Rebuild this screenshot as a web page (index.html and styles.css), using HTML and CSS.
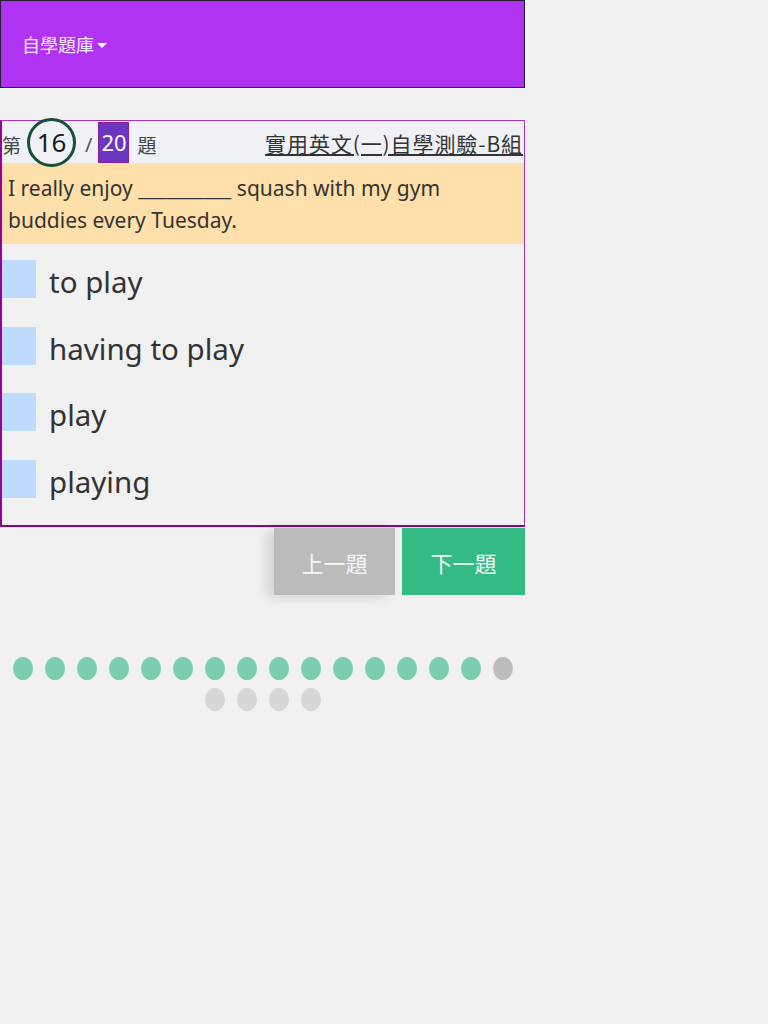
FILE: index.html
```html
<!DOCTYPE html>
<html lang="zh-Hant">
<head>
<meta charset="utf-8">
<title>自學題庫</title>
<link rel="stylesheet" href="styles.css">
</head>
<body>
<div class="page">
  <header class="topbar">
    <span class="menu">自學題庫<span class="caret"></span></span>
  </header>

  <section class="quiz">
    <div class="quiz-head">
      <div class="counter">
        <span class="lbl">第</span>
        <span class="cur">16</span>
        <span class="slash">/</span>
        <span class="total">20</span>
        <span class="lbl">題</span>
      </div>
      <a class="title">實用英文(一)自學測驗-B組</a>
    </div>
    <div class="question">I really enjoy __________ squash with my gym buddies every Tuesday.</div>
    <ul class="options">
      <li class="option"><span class="box"></span><span class="opt-text">to play</span></li>
      <li class="option"><span class="box"></span><span class="opt-text">having to play</span></li>
      <li class="option"><span class="box"></span><span class="opt-text">play</span></li>
      <li class="option"><span class="box"></span><span class="opt-text">playing</span></li>
    </ul>
  </section>

  <div class="nav">
    <button class="btn prev">上一題</button>
    <button class="btn next">下一題</button>
  </div>

  <div class="dots">
    <span class="dot done"></span><span class="dot done"></span><span class="dot done"></span><span class="dot done"></span><span class="dot done"></span><span class="dot done"></span><span class="dot done"></span><span class="dot done"></span><span class="dot done"></span><span class="dot done"></span><span class="dot done"></span><span class="dot done"></span><span class="dot done"></span><span class="dot done"></span><span class="dot done"></span><span class="dot current"></span><span class="dot"></span><span class="dot"></span><span class="dot"></span><span class="dot"></span>
  </div>
</div>
</body>
</html>
```

FILE: styles.css
```css
* { box-sizing: border-box; }

body {
  margin: 0;
  background: #f1f1f1;
  font-family: "Noto Sans", "Noto Sans CJK TC", sans-serif;
  color: #333;
}

.page {
  width: 525px;
}

.topbar {
  height: 88px;
  background: #b033f2;
  border: 1px solid #2a1a30;
  display: flex;
  align-items: center;
  padding: 0 0 0 21px;
}

.menu {
  font-family: "Noto Sans CJK TC", sans-serif;
  font-size: 18px;
  color: #f6e8ff;
  display: flex;
  align-items: center;
}

.caret {
  display: inline-block;
  width: 0;
  height: 0;
  margin-left: 3px;
  margin-top: 2px;
  border-left: 5px solid transparent;
  border-right: 5px solid transparent;
  border-top: 5px solid #ffffff;
}

.quiz {
  margin-top: 32px;
  height: 407px;
  border: 1px solid #a532b8;
  border-left: 2px solid #990099;
  border-bottom: 2px solid #8b008b;
  display: flex;
  flex-direction: column;
}

.quiz-head {
  height: 42px;
  background: #f0f1f6;
  display: flex;
  align-items: center;
  justify-content: space-between;
  padding-right: 1px;
}

.counter {
  display: flex;
  align-items: center;
  padding-top: 4px;
}

.lbl {
  font-family: "Noto Sans CJK TC", sans-serif;
  font-size: 19px;
  color: #444;
}

.cur {
  width: 49px;
  height: 49px;
  border: 3px solid #154f3b;
  border-radius: 50%;
  display: flex;
  align-items: center;
  justify-content: center;
  font-size: 26px;
  font-weight: 400;
  color: #1a1a1a;
  margin: -4px 0 0 6px;
  position: relative;
  z-index: 1;
}

.slash {
  font-size: 20px;
  color: #555;
  margin: 0 6px 0 9px;
}

.total {
  width: 31px;
  height: 41px;
  background: #6c37c0;
  border: 1px solid #8a1e9a;
  color: #fff;
  font-size: 22px;
  font-weight: 400;
  display: flex;
  align-items: center;
  justify-content: center;
  margin: -4px 8px 0 0;
}

.title {
  font-family: "Noto Sans CJK TC", sans-serif;
  font-size: 21px;
  font-weight: 400;
  color: #333;
  text-decoration: underline;
  letter-spacing: 0.9px;
  padding-top: 1px;
}

.question {
  height: 81px;
  background: #ffdfaa;
  padding: 9px 6px 0 6px;
  font-size: 21px;
  line-height: 32px;
  color: #333;
}

.options {
  list-style: none;
  margin: 0;
  padding: 16px 0 0 0;
  display: flex;
  flex-direction: column;
  gap: 28.5px;
}

.option {
  display: flex;
  align-items: center;
  height: 38px;
}

.box {
  width: 34px;
  height: 38px;
  background: #bfdaff;
  flex: none;
}

.opt-text {
  margin-left: 13px;
  font-size: 29.5px;
  color: #333;
  padding-top: 5px;
}

.nav {
  display: flex;
  justify-content: flex-end;
  gap: 7px;
  margin-top: 1px;
}

.btn {
  border: none;
  height: 67px;
  font-family: "Noto Sans CJK TC", sans-serif;
  font-size: 22px;
  color: #f6f6f6;
  padding: 0;
}

.prev {
  width: 121px;
  background: #bbbbbb;
  box-shadow: -8px 2px 12px rgba(0, 0, 0, 0.12);
}

.next {
  width: 123px;
  background: #34bb84;
}

.dots {
  margin-top: 58px;
  text-align: center;
  font-size: 0;
  line-height: 0;
}

.dot {
  display: inline-block;
  width: 20px;
  height: 23px;
  margin: 4px 6px;
  border-radius: 50%;
  background: #d6d6d6;
}

.dot.done { background: #7ccdad; }
.dot.current { background: #bcbcbc; }
```
